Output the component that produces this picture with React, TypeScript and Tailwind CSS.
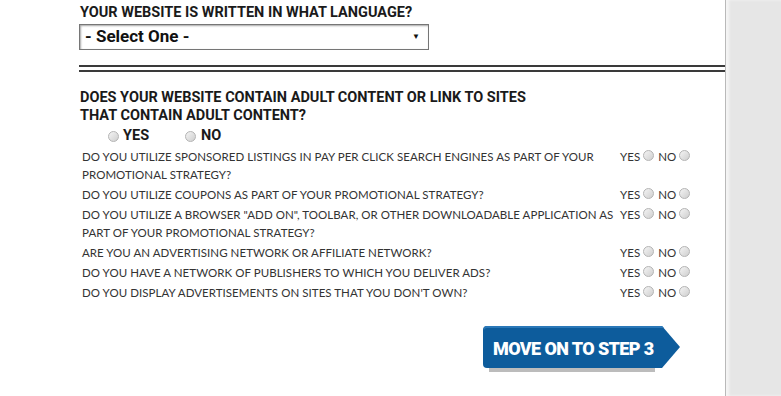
import React from 'react';

const questions = [
  'DO YOU UTILIZE SPONSORED LISTINGS IN PAY PER CLICK SEARCH ENGINES AS PART OF YOUR PROMOTIONAL STRATEGY?',
  'DO YOU UTILIZE COUPONS AS PART OF YOUR PROMOTIONAL STRATEGY?',
  'DO YOU UTILIZE A BROWSER "ADD ON", TOOLBAR, OR OTHER DOWNLOADABLE APPLICATION AS PART OF YOUR PROMOTIONAL STRATEGY?',
  'ARE YOU AN ADVERTISING NETWORK OR AFFILIATE NETWORK?',
  'DO YOU HAVE A NETWORK OF PUBLISHERS TO WHICH YOU DELIVER ADS?',
  "DO YOU DISPLAY ADVERTISEMENTS ON SITES THAT YOU DON'T OWN?",
];

function Radio() {
  return (
    <span className="inline-block w-[11px] h-[11px] rounded-full border border-[#b4b4b4] bg-gradient-to-br from-[#f4f4f4] to-[#cfcfcf] shrink-0" />
  );
}

export default function App() {
  return (
    <div className="flex w-[781px] h-[396px] overflow-hidden bg-white">
      {/* Main form column */}
      <div className="w-[725px] pl-[79px] pt-[5px]" style={{ fontFamily: 'Roboto, sans-serif' }}>
        <h2 className="text-[14.5px] font-bold leading-[16px] text-[#1a1a1a] pl-[1px]">
          YOUR WEBSITE IS WRITTEN IN WHAT LANGUAGE?
        </h2>

        {/* Language select */}
        <div className="mt-[3px] w-[350px] h-[26px] border border-[#767676] shadow-[inset_1px_1px_2px_rgba(0,0,0,0.35)] flex items-center justify-between pl-[5px] pr-[8px]">
          <span className="text-[17px] font-bold text-[#111]">- Select One -</span>
          <span className="text-[8px] text-[#111]">▼</span>
        </div>

        {/* Double divider */}
        <div className="mt-[15px] h-[2px] bg-[#3a3a3a]" />
        <div className="mt-[3px] h-[2px] bg-[#3a3a3a]" />

        {/* Adult content question */}
        <div className="mt-[17px] pl-[1px] text-[14.5px] font-bold leading-[18px] text-[#1a1a1a]">
          <p>DOES YOUR WEBSITE CONTAIN ADULT CONTENT OR LINK TO SITES</p>
          <p>THAT CONTAIN ADULT CONTENT?</p>
        </div>
        <div className="mt-[1px] ml-[29px] flex items-center h-[20px] text-[14.5px] font-bold text-[#1a1a1a]">
          <Radio />
          <span className="ml-[4px]">YES</span>
          <span className="ml-[36px] flex items-center">
            <Radio />
            <span className="ml-[5px]">NO</span>
          </span>
        </div>

        {/* Promotional strategy table */}
        <div
          className="mt-[1px] pl-[3px] text-[11.5px] tracking-[0.05px] text-[#333]"
          style={{ fontFamily: 'Lato, sans-serif' }}
        >
          {questions.map((q) => (
            <div key={q} className="grid grid-cols-[539px_1fr] py-[1px] leading-[18px]">
              <span>{q}</span>
              <span className="flex items-center h-[18px] self-start -ml-[1px]">
                <span>YES</span>
                <span className="ml-[3px]"><Radio /></span>
                <span className="ml-[4px]">NO</span>
                <span className="ml-[3px]"><Radio /></span>
              </span>
            </div>
          ))}
        </div>

        {/* Next step button */}
        <div className="mt-[23px] ml-[404px] relative w-[198px] h-[48px]">
          <svg width="198" height="48" viewBox="0 0 198 48" className="absolute inset-0">
            <rect x="6" y="40" width="166" height="6" fill="#bcbcbc" />
            <path d="M4 0 H179 L197 21 L179 42 H4 Q0 42 0 38 V4 Q0 0 4 0 Z" fill="#0d5c9c" />
            <path d="M4 0 H179 L181 2 H4 Q1 2 1 5 V4 Q0 0 4 0 Z" fill="#2a78b8" />
          </svg>
          <span
            className="absolute left-[10px] top-[9px] text-[18px] font-black text-white tracking-[-0.6px]"
            style={{ fontFamily: 'Roboto, sans-serif' }}
          >
            MOVE ON TO STEP 3
          </span>
        </div>
      </div>

      {/* Right gutter */}
      <div className="flex-1 border-l border-[#b9b9b9] bg-[#e6e6e6] shadow-[inset_3px_0_3px_rgba(255,255,255,0.6)]" />
    </div>
  );
}
